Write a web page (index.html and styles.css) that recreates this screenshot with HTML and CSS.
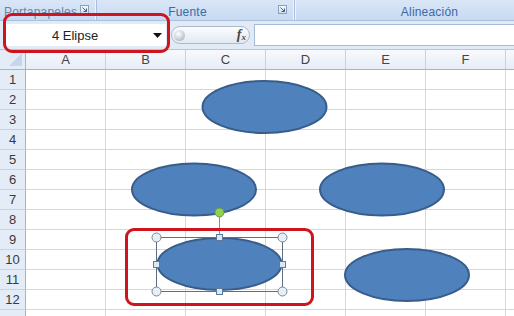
FILE: index.html
```html
<!DOCTYPE html>
<html lang="es">
<head>
<meta charset="utf-8">
<title>Excel</title>
<link rel="stylesheet" href="styles.css">
</head>
<body>
<div class="app">
  <div class="ribbon">
    <div class="group g1"><span class="glabel">Portapapeles</span><i class="launcher"><svg width="5" height="5" viewBox="0 0 5 5"><path d="M0.5 0.5L4.5 4.5M4.5 1.5V4.5H1.5" fill="none" stroke="#46618a" stroke-width="1"/></svg></i></div>
    <div class="group g2"><span class="glabel">Fuente</span><i class="launcher"><svg width="5" height="5" viewBox="0 0 5 5"><path d="M0.5 0.5L4.5 4.5M4.5 1.5V4.5H1.5" fill="none" stroke="#46618a" stroke-width="1"/></svg></i></div>
    <div class="group g3"><span class="glabel">Alineación</span></div>
  </div>
  <div class="fbar">
    <div class="namebox"><span class="nametext">4 Elipse</span><svg class="drop" width="9" height="5" viewBox="0 0 9 5"><path d="M0 0H9L4.5 5Z" fill="#111"/></svg></div>
    <div class="fxbtn"><span class="knob"></span><span class="fx">f<sub>x</sub></span></div>
    <div class="finput"></div>
  </div>
  <div class="sheet">
    <div class="corner"></div>
    <div class="ch">A</div><div class="ch">B</div><div class="ch">C</div><div class="ch">D</div><div class="ch">E</div><div class="ch">F</div><div class="ch last"></div>
    <div class="rh">1</div><div class="c"></div><div class="c"></div><div class="c"></div><div class="c"></div><div class="c"></div><div class="c"></div><div class="c last"></div>
    <div class="rh">2</div><div class="c"></div><div class="c"></div><div class="c"></div><div class="c"></div><div class="c"></div><div class="c"></div><div class="c last"></div>
    <div class="rh">3</div><div class="c"></div><div class="c"></div><div class="c"></div><div class="c"></div><div class="c"></div><div class="c"></div><div class="c last"></div>
    <div class="rh">4</div><div class="c"></div><div class="c"></div><div class="c"></div><div class="c"></div><div class="c"></div><div class="c"></div><div class="c last"></div>
    <div class="rh">5</div><div class="c"></div><div class="c"></div><div class="c"></div><div class="c"></div><div class="c"></div><div class="c"></div><div class="c last"></div>
    <div class="rh">6</div><div class="c"></div><div class="c"></div><div class="c"></div><div class="c"></div><div class="c"></div><div class="c"></div><div class="c last"></div>
    <div class="rh">7</div><div class="c"></div><div class="c"></div><div class="c"></div><div class="c"></div><div class="c"></div><div class="c"></div><div class="c last"></div>
    <div class="rh">8</div><div class="c"></div><div class="c"></div><div class="c"></div><div class="c"></div><div class="c"></div><div class="c"></div><div class="c last"></div>
    <div class="rh">9</div><div class="c"></div><div class="c"></div><div class="c"></div><div class="c"></div><div class="c"></div><div class="c"></div><div class="c last"></div>
    <div class="rh">10</div><div class="c"></div><div class="c"></div><div class="c"></div><div class="c"></div><div class="c"></div><div class="c"></div><div class="c last"></div>
    <div class="rh">11</div><div class="c"></div><div class="c"></div><div class="c"></div><div class="c"></div><div class="c"></div><div class="c"></div><div class="c last"></div>
    <div class="rh">12</div><div class="c"></div><div class="c"></div><div class="c"></div><div class="c"></div><div class="c"></div><div class="c"></div><div class="c last"></div>
    <div class="rh"></div><div class="c"></div><div class="c"></div><div class="c"></div><div class="c"></div><div class="c"></div><div class="c"></div><div class="c last"></div>
  </div>

  <svg class="shapes" width="514" height="316" viewBox="0 0 514 316">
    <g fill="#4f81bd" stroke="#385d8a" stroke-width="2">
      <ellipse cx="264.5" cy="107" rx="62" ry="26"/>
      <ellipse cx="194" cy="189.5" rx="62" ry="26"/>
      <ellipse cx="382" cy="189.5" rx="62" ry="26"/>
      <ellipse cx="219.5" cy="264" rx="62" ry="26"/>
      <ellipse cx="407" cy="275" rx="62" ry="26"/>
    </g>
    <g class="sel">
      <rect x="156.5" y="237.5" width="126" height="54" fill="none" stroke="#5f6f82" stroke-width="1"/>
      <line x1="219.5" y1="216" x2="219.5" y2="237" stroke="#8a8f96" stroke-width="1"/>
      <circle cx="219.5" cy="212.5" r="4.5" fill="#92d050" stroke="#6a9a3a"/>
      <g fill="#e6eef8" stroke="#7a8794">
        <circle cx="156.5" cy="237.5" r="4.5"/>
        <circle cx="282.5" cy="237.5" r="4.5"/>
        <circle cx="156.5" cy="291.5" r="4.5"/>
        <circle cx="282.5" cy="291.5" r="4.5"/>
      </g>
      <g fill="#dbe8f6" stroke="#5c7a99">
        <rect x="216.5" y="234.5" width="6" height="6"/>
        <rect x="216.5" y="288.5" width="6" height="6"/>
        <rect x="153.5" y="261.5" width="6" height="6"/>
        <rect x="279.5" y="261.5" width="6" height="6"/>
      </g>
    </g>
  </svg>

  <div class="mark mark-name"></div>
  <div class="mark mark-shape"></div>
</div>
</body>
</html>
```

FILE: styles.css
```css
html, body {
  margin: 0;
  padding: 0;
  background: #ffffff;
}

.app {
  position: relative;
  width: 514px;
  height: 316px;
  overflow: hidden;
  font-family: "Liberation Sans", Arial, sans-serif;
}

/* ribbon group labels */
.ribbon {
  display: flex;
  height: 21px;
  background: linear-gradient(#d9e6f6, #c8daf2);
  border-bottom: 1px solid #aac1de;
  box-sizing: border-box;
}

.group {
  position: relative;
  display: flex;
  align-items: center;
  justify-content: center;
  box-sizing: border-box;
  border-right: 1px solid #a9bfdb;
  box-shadow: inset -1px 0 0 #eef4fc;
}

.g1 { width: 97px; justify-content: flex-start; padding-left: 4px; }
.g2 { width: 198px; padding-right: 16px; }
.g3 { flex: 1; border-right: none; box-shadow: inset 1px 0 0 #eef4fc; padding-left: 50px; }

.glabel {
  font-size: 12px;
  color: #3c68a4;
  letter-spacing: 0.2px;
  margin-top: 4px;
}

.g1 .glabel { margin-top: 4px; color: #6b83a6; }

.launcher {
  position: absolute;
  right: 7px;
  top: 5px;
  width: 7px;
  height: 7px;
  display: flex;
  align-items: center;
  justify-content: center;
  border: 1px solid #8aa0bd;
  background: linear-gradient(#f4f7fb, #d6e1ef);
}

/* formula bar */
.fbar {
  display: flex;
  align-items: center;
  height: 29px;
  background: #e2eaf6;
  border-bottom: 1px solid #b3c5dd;
  box-sizing: border-box;
  padding-left: 5px;
}

.namebox {
  display: flex;
  align-items: center;
  width: 161px;
  height: 22px;
  background: #ffffff;
  box-sizing: border-box;
  padding: 0 4px 0 0;
}

.nametext {
  flex: 1;
  text-align: center;
  font-size: 13px;
  color: #222;
  padding-right: 8px;
  padding-top: 1px;
}

.fxbtn {
  display: flex;
  align-items: center;
  justify-content: space-between;
  width: 79px;
  height: 18px;
  margin-left: 5px;
  border: 1px solid #a9bad1;
  border-radius: 9px;
  background: linear-gradient(#fbfcfe, #e2e9f3);
  box-sizing: border-box;
  padding: 0 3px 0 2px;
}

.knob {
  width: 11px;
  height: 11px;
  border-radius: 50%;
  background: radial-gradient(circle at 40% 35%, #ffffff, #b9c2cc 70%, #9aa4b0);
}

.fx {
  font-family: "Liberation Serif", "Times New Roman", serif;
  font-style: italic;
  font-weight: bold;
  font-size: 14px;
  color: #4a4a4a;
  line-height: 1;
}

.fx sub {
  font-size: 9px;
  vertical-align: -1px;
}

.finput {
  flex: 1;
  height: 22px;
  margin-left: 4px;
  background: #ffffff;
  border: 1px solid #a7bbd6;
  border-right: none;
  box-sizing: border-box;
}

/* sheet grid */
.sheet {
  display: grid;
  grid-template-columns: 26px repeat(6, 80px) 8px;
  grid-template-rows: 20px repeat(13, 20px);
}

.corner {
  position: relative;
  background: #e4ecf7;
  border-right: 1px solid #9eb6ce;
  border-bottom: 1px solid #9eb6ce;
  box-sizing: border-box;
}

.corner::after {
  content: "";
  position: absolute;
  right: 3px;
  bottom: 3px;
  width: 0;
  height: 0;
  border-left: 13px solid transparent;
  border-bottom: 13px solid #c7d6ea;
}

.ch {
  display: flex;
  align-items: center;
  justify-content: center;
  background: linear-gradient(#f7f9fc, #e6edf7);
  border-right: 1px solid #c5d3e5;
  border-bottom: 1px solid #9eb6ce;
  box-sizing: border-box;
  font-size: 13px;
  color: #444;
}

.rh {
  display: flex;
  align-items: center;
  justify-content: center;
  background: #e4ecf7;
  border-right: 1px solid #9eb6ce;
  border-bottom: 1px solid #c5d3e5;
  box-sizing: border-box;
  font-size: 13px;
  color: #3a3a3a;
}

.c {
  border-right: 1px solid #d0d7e5;
  border-bottom: 1px solid #d0d7e5;
  box-sizing: border-box;
}

.c.last, .ch.last { border-right: none; }

/* overlays */
.shapes {
  position: absolute;
  left: 0;
  top: 0;
}

.mark {
  position: absolute;
  border: 3px solid #d0141e;
  border-radius: 9px;
  box-sizing: border-box;
}

.mark-name {
  left: 3px;
  top: 13px;
  width: 167px;
  height: 40px;
}

.mark-shape {
  left: 125px;
  top: 228px;
  width: 189px;
  height: 78px;
}
```
